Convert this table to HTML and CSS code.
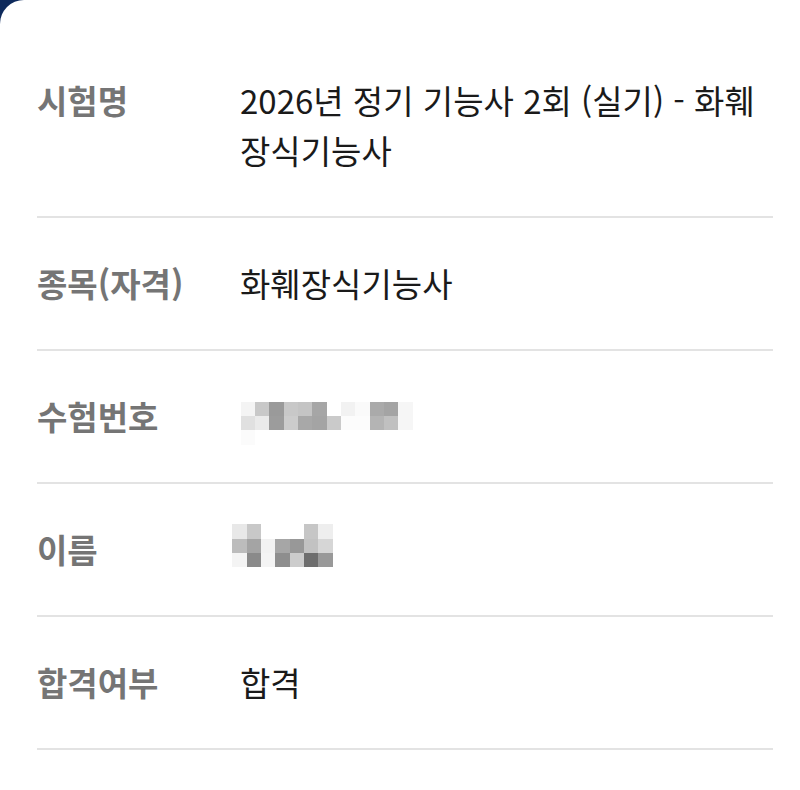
FILE: index.html
```html
<!DOCTYPE html>
<html lang="ko">
<head>
  <meta charset="UTF-8">
  <meta name="viewport" content="width=device-width, initial-scale=1.0">
  <title>합격자 조회</title>
  <link rel="stylesheet" href="styles.css">
</head>
<body>
<div class="sheet">
  <dl class="info-list">
    <div class="info-row">
      <dt>시험명</dt>
      <dd>2026년 정기 기능사 2회 (실기) - 화훼장식기능사</dd>
    </div>
    <div class="info-row">
      <dt>종목(자격)</dt>
      <dd>화훼장식기능사</dd>
    </div>
    <div class="info-row">
      <dt>수험번호</dt>
      <dd class="masked"><div class="mosaic mosaic-number" id="mosaic-number"></div></dd>
    </div>
    <div class="info-row">
      <dt>이름</dt>
      <dd class="masked"><div class="mosaic mosaic-name" id="mosaic-name"></div></dd>
    </div>
    <div class="info-row">
      <dt>합격여부</dt>
      <dd>합격</dd>
    </div>
  </dl>
</div>

<script>
  // Blurred (pixelated) personal data, one grey level per cell
  const numberCells = [
    ['f4', 'c8', '9a', 'c8', 'c4', 'a6', 'ff', 'f2', 'fa', 'aa', 'a4', 'f6'],
    ['e0', 'ea', '9c', 'cc', 'a8', 'a4', 'ca', 'fc', 'fc', 'b4', 'c0', 'f6'],
    ['fb', 'ff', 'ff', 'ff', 'ff', 'ff', 'ff', 'ff', 'ff', 'ff', 'ff', 'ff']
  ];
  const nameCells = [
    ['e8', 'c8', 'ff', 'ff', 'ff', 'c6', 'ee'],
    ['bc', 'a4', 'f2', 'a6', '98', 'c2', 'd6'],
    ['f4', '8a', 'f4', '8e', 'cc', '6e', '99']
  ];

  function drawMosaic(id, rows) {
    const box = document.getElementById(id);
    box.style.gridTemplateColumns = 'repeat(' + rows[0].length + ', 14.33px)';
    rows.forEach((row) => {
      row.forEach((level) => {
        const cell = document.createElement('span');
        cell.style.background = '#' + level + level + level;
        box.appendChild(cell);
      });
    });
  }

  drawMosaic('mosaic-number', numberCells);
  drawMosaic('mosaic-name', nameCells);
</script>
</body>
</html>
```

FILE: styles.css
```css
body {
  margin: 0;
  background-color: #0e2a5c;
  font-family: "Noto Sans CJK KR", "Noto Sans", sans-serif;
}

.sheet {
  min-height: 790px;
  background: white;
  border-top-left-radius: 24px;
  padding: 35px 27px 0 37px;
  box-sizing: border-box;
}

.info-list {
  margin: 0;
}

.info-row {
  display: grid;
  grid-template-columns: 203px 1fr;
  padding: 40px 0 41px;
  border-bottom: 2px solid #e3e3e3;
  line-height: 50px;
}

.info-row dt {
  font-size: 33px;
  font-weight: bold;
  color: #757575;
}

.info-row dd {
  margin: 0;
  font-size: 33px;
  color: #1a1a1a;
}

.info-row dd.masked {
  height: 50px;
}

.mosaic {
  display: grid;
  grid-auto-rows: 14.33px;
}

.mosaic-number {
  margin-top: 10.7px;
  margin-left: 0.7px;
}

.mosaic-name {
  margin-top: 0.3px;
  margin-left: -7.7px;
}
```
